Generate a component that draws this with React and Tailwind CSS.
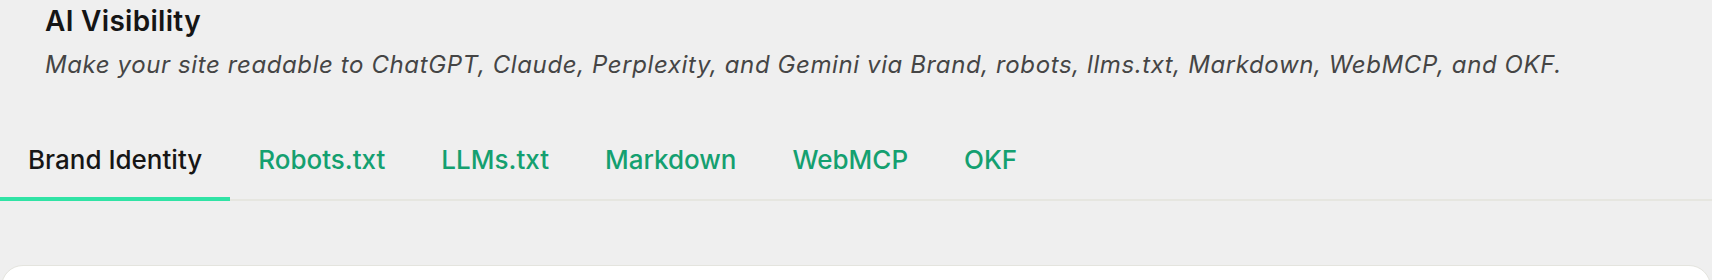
import React, { useState } from 'react';

const tabs = ['Brand Identity', 'Robots.txt', 'LLMs.txt', 'Markdown', 'WebMCP', 'OKF'];

export default function App() {
  const [active, setActive] = useState('Brand Identity');

  return (
    <main
      className="min-h-screen bg-[#efefef] text-[#151515]"
      style={{ fontFamily: 'Inter, "Noto Sans", sans-serif' }}
    >
      <header className="px-[45px] pt-[3px]">
        <h1 className="text-[28px] font-semibold leading-[36px] tracking-[0.3px]">AI Visibility</h1>
        <p className="mt-[11px] text-[24px] italic leading-[30px] tracking-[0.6px] text-[#454545]">
          Make your site readable to ChatGPT, Claude, Perplexity, and Gemini via Brand, robots, llms.txt,
          Markdown, WebMCP, and OKF.
        </p>
      </header>

      <nav className="mt-[58px] flex border-b-2 border-[#e6e6e0]">
        {tabs.map((tab) => (
          <button
            key={tab}
            onClick={() => setActive(tab)}
            className={`-mb-[2px] border-b-4 px-[28px] pb-[21px] pt-[6px] text-[26px] font-medium leading-[32px] ${
              active === tab
                ? 'border-[#30e3a5] text-[#161616]'
                : 'border-transparent text-[#14a070]'
            }`}
          >
            {tab}
          </button>
        ))}
      </nav>

      <section className="mx-px mt-[64px] h-[60px] rounded-t-[22px] border border-[#e4e4de] bg-white" />
    </main>
  );
}
